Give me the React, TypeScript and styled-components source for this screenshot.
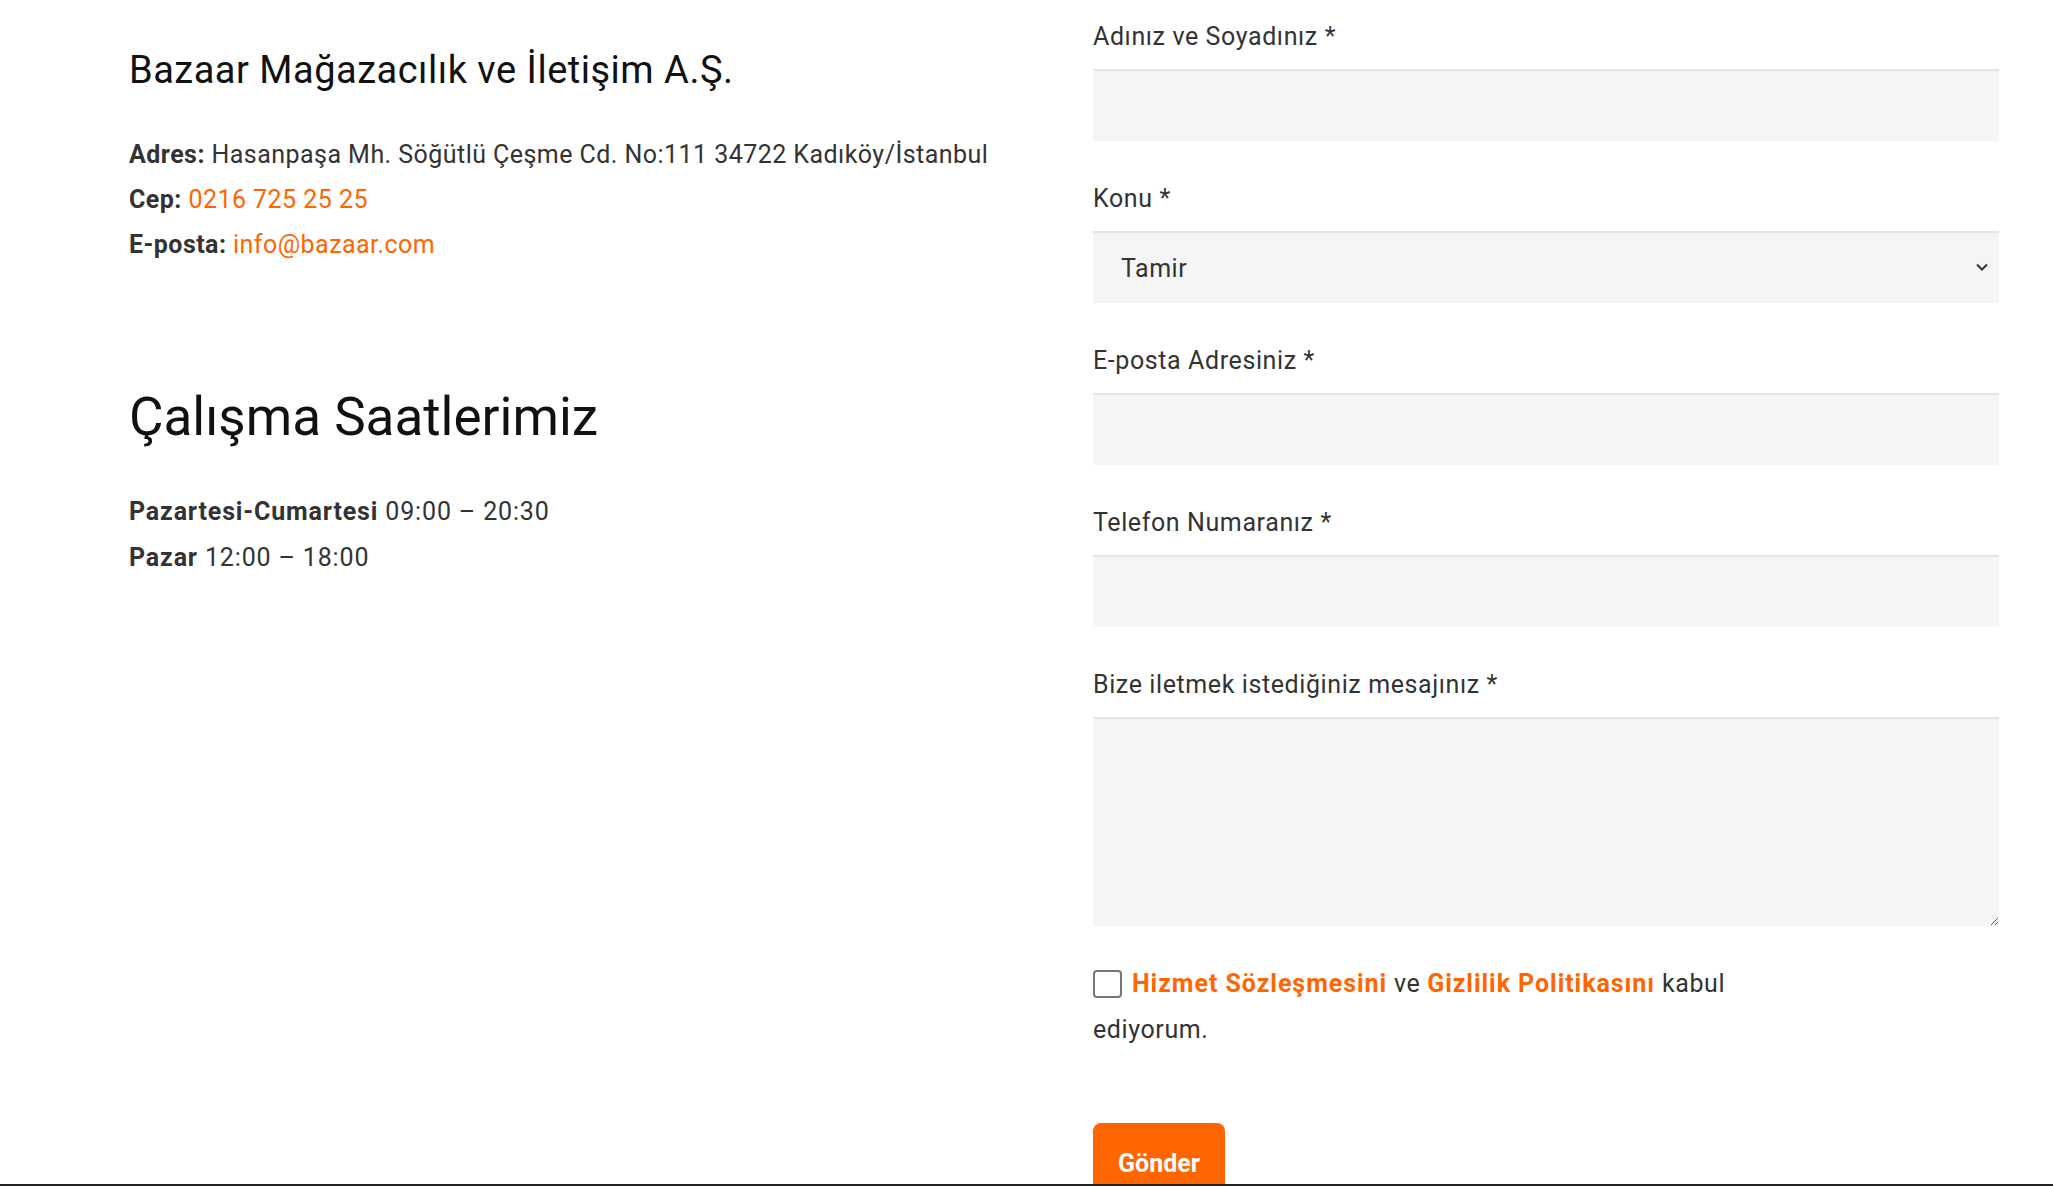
import React from "react";
import styled, { createGlobalStyle } from "styled-components";

const GlobalStyle = createGlobalStyle`
  html, body {
    margin: 0;
    padding: 0;
    background: #ffffff;
    overflow: hidden;
  }
  body {
    font-family: Roboto, "Noto Sans", "Liberation Sans", sans-serif;
    color: #333333;
  }
  * { box-sizing: border-box; }
`;

const ORANGE = "#ff6600";

const Main = styled.main`
  height: 1184px;
  overflow: hidden;
  display: grid;
  grid-template-columns: 1fr 906px;
  padding: 0 54px 0 129px;
`;

const InfoColumn = styled.section`
  padding-top: 48px;
`;

const CompanyTitle = styled.h2`
  margin: 0 0 40px;
  font-size: 38px;
  line-height: 44px;
  letter-spacing: 0.5px;
  font-weight: 400;
  color: #111111;
`;

const InfoLine = styled.p`
  margin: 0;
  font-size: 25px;
  line-height: 45px;
  letter-spacing: 0.45px;
  color: #333333;
`;

const Strong = styled.strong`
  font-weight: 700;
  color: #333333;
`;

const OrangeLink = styled.a`
  color: ${ORANGE};
  text-decoration: none;
`;

const HoursTitle = styled.h2`
  margin: 118px 0 40px;
  font-size: 53px;
  line-height: 64px;
  font-weight: 400;
  color: #111111;
`;

const HoursLine = styled.p`
  margin: 0;
  font-size: 25px;
  line-height: 46px;
  letter-spacing: 0.85px;
  color: #333333;
`;

const FormColumn = styled.form`
  padding-top: 20px;
  display: flex;
  flex-direction: column;
`;

const Field = styled.div<{ $last?: boolean }>`
  display: flex;
  flex-direction: column;
  margin-bottom: ${(p) => (p.$last ? "0" : "41px")};
`;

const Label = styled.label`
  display: block;
  font-size: 25px;
  line-height: 34px;
  letter-spacing: 0.6px;
  margin-bottom: 15px;
  color: #333333;
`;

const TextInput = styled.input`
  display: block;
  width: 100%;
  height: 72px;
  border: none;
  border-top: 2px solid #e4e4e4;
  background: #f5f5f5;
  padding: 0 28px;
  font-family: inherit;
  font-size: 25px;
  color: #333333;
  outline: none;
`;

const SelectWrap = styled.div`
  position: relative;
`;

const Select = styled.select`
  display: block;
  width: 100%;
  height: 72px;
  border: none;
  border-top: 2px solid #e4e4e4;
  background: #f5f5f5;
  padding: 0 28px;
  font-family: inherit;
  font-size: 25px;
  letter-spacing: 0.5px;
  color: #333333;
  appearance: none;
  -webkit-appearance: none;
  outline: none;
`;

const Chevron = styled.svg`
  position: absolute;
  right: 10px;
  top: 31px;
  width: 14px;
  height: 10px;
  pointer-events: none;
`;

const TextArea = styled.textarea`
  display: block;
  width: 100%;
  height: 209px;
  border: none;
  border-top: 2px solid #e4e4e4;
  background: #f5f5f5;
  padding: 16px 28px;
  font-family: inherit;
  font-size: 25px;
  color: #333333;
  resize: vertical;
  outline: none;
`;

const Consent = styled.p`
  margin: 35px 0 0;
  font-size: 25px;
  line-height: 46px;
  letter-spacing: 0.6px;
  color: #333333;
`;

const CheckBox = styled.input`
  appearance: none;
  -webkit-appearance: none;
  width: 29px;
  height: 28px;
  margin: 0 10px 0 0;
  border: 2px solid #767676;
  border-radius: 4px;
  background: #ffffff;
  vertical-align: -6px;
`;

const ConsentLink = styled.a`
  color: ${ORANGE};
  font-weight: 700;
  letter-spacing: 0.95px;
  text-decoration: none;
`;

const SubmitButton = styled.button`
  align-self: flex-start;
  margin-top: 70px;
  width: 132px;
  height: 80px;
  padding: 18px 0 0;
  border: none;
  border-radius: 8px 8px 0 0;
  background: ${ORANGE};
  color: #ffffff;
  font-family: inherit;
  font-size: 25px;
  line-height: 46px;
  font-weight: 700;
  display: flex;
  justify-content: center;
  align-items: flex-start;
`;

const Footer = styled.footer`
  height: 2px;
  background: #222222;
`;

export default function App() {
  return (
    <>
      <GlobalStyle />
      <Main>
        <InfoColumn>
          <CompanyTitle>Bazaar Mağazacılık ve İletişim A.Ş.</CompanyTitle>
          <InfoLine>
            <Strong>Adres:</Strong> Hasanpaşa Mh. Söğütlü Çeşme Cd. No:111 34722 Kadıköy/İstanbul
          </InfoLine>
          <InfoLine>
            <Strong>Cep:</Strong> <OrangeLink href="#">0216 725 25 25</OrangeLink>
          </InfoLine>
          <InfoLine>
            <Strong>E-posta:</Strong> <OrangeLink href="#">info@bazaar.com</OrangeLink>
          </InfoLine>

          <HoursTitle>Çalışma Saatlerimiz</HoursTitle>
          <HoursLine>
            <Strong>Pazartesi-Cumartesi</Strong> 09:00 – 20:30
          </HoursLine>
          <HoursLine>
            <Strong>Pazar</Strong> 12:00 – 18:00
          </HoursLine>
        </InfoColumn>

        <FormColumn onSubmit={(e) => e.preventDefault()}>
          <Field>
            <Label htmlFor="name">Adınız ve Soyadınız *</Label>
            <TextInput id="name" type="text" />
          </Field>
          <Field>
            <Label htmlFor="subject">Konu *</Label>
            <SelectWrap>
              <Select id="subject" defaultValue="Tamir">
                <option>Tamir</option>
                <option>Satış</option>
                <option>Diğer</option>
              </Select>
              <Chevron viewBox="0 0 14 10">
                <path d="M2 2.5 L7 7.5 L12 2.5" fill="none" stroke="#333" strokeWidth="2" />
              </Chevron>
            </SelectWrap>
          </Field>
          <Field>
            <Label htmlFor="email">E-posta Adresiniz *</Label>
            <TextInput id="email" type="email" />
          </Field>
          <Field>
            <Label htmlFor="phone">Telefon Numaranız *</Label>
            <TextInput id="phone" type="tel" />
          </Field>
          <Field $last>
            <Label htmlFor="message">Bize iletmek istediğiniz mesajınız *</Label>
            <TextArea id="message" />
          </Field>

          <Consent>
            <CheckBox type="checkbox" aria-label="onay" />
            <ConsentLink href="#">Hizmet Sözleşmesini</ConsentLink> ve{" "}
            <ConsentLink href="#">Gizlilik Politikasını</ConsentLink> kabul
            <br />
            ediyorum.
          </Consent>

          <SubmitButton type="submit">Gönder</SubmitButton>
        </FormColumn>
      </Main>
      <Footer />
    </>
  );
}
